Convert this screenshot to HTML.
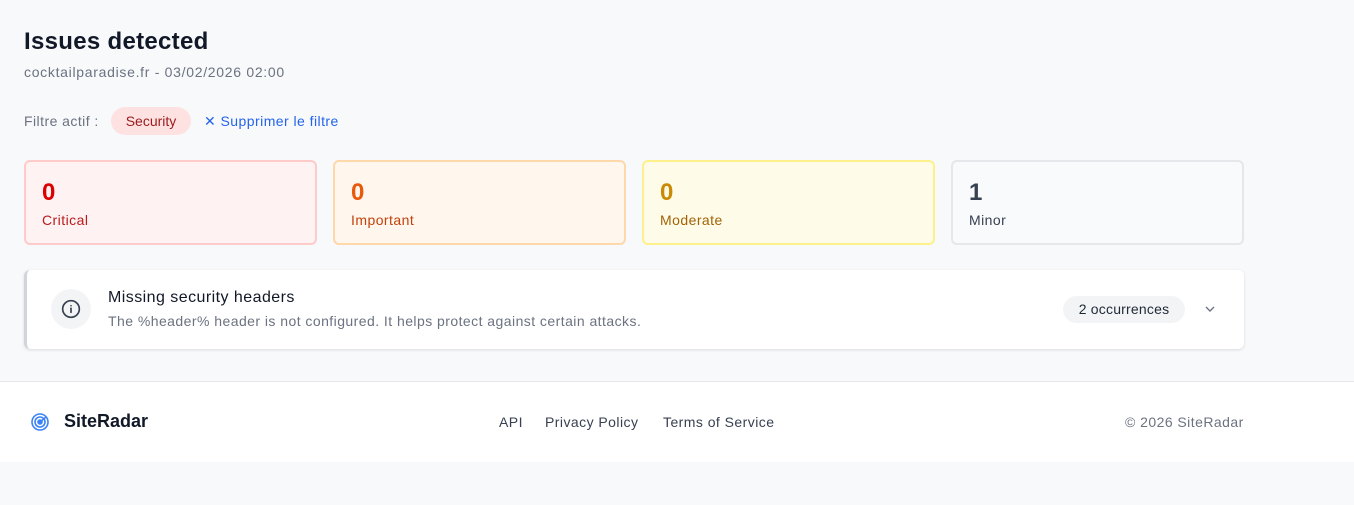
<!DOCTYPE html>
<html><head><meta charset="utf-8"><style>
*{box-sizing:border-box;margin:0;padding:0}
body{width:1354px;height:505px;background:#f8f9fb;font-family:"Liberation Sans",sans-serif;color:#111827;position:relative;overflow:hidden;letter-spacing:0.45px}
.abs{position:absolute}
h1{position:absolute;left:24px;top:28px;font-size:24px;font-weight:bold;color:#111827;letter-spacing:0.3px}
.sub{left:24px;top:64px;font-size:14px;color:#6b7280;letter-spacing:0.7px}
.card{position:absolute;top:160px;width:293px;height:85px;border-radius:6px;border:2px solid}
.card .n{position:absolute;left:16px;top:17px;font-size:24px;font-weight:bold}
.card .l{position:absolute;left:16px;top:50px;font-size:14px}
</style></head><body>
<h1>Issues detected</h1>
<div class="abs sub">cocktailparadise.fr - 03/02/2026 02:00</div>
<div class="abs" style="left:24px;top:113px;font-size:14px;color:#6b7280">Filtre actif :</div>
<div class="abs" style="left:111px;top:107px;width:80px;height:28px;border-radius:14px;background:#fee2e2;color:#991b1b;font-size:14px;text-align:center;line-height:28px;letter-spacing:0">Security</div>
<div class="abs" style="left:204px;top:113px;font-size:14px;color:#2563eb">✕ Supprimer le filtre</div>
<div class="card" style="left:24px;background:#fef2f2;border-color:#fecaca"><div class="n" style="color:#dc0000">0</div><div class="l" style="color:#b91c1c">Critical</div></div>
<div class="card" style="left:333px;background:#fff7ed;border-color:#fed7aa"><div class="n" style="color:#ea580c">0</div><div class="l" style="color:#c2410c">Important</div></div>
<div class="card" style="left:642px;background:#fefce8;border-color:#fef08a"><div class="n" style="color:#ca8a04">0</div><div class="l" style="color:#a16207">Moderate</div></div>
<div class="card" style="left:951px;background:#f9fafb;border-color:#e5e7eb"><div class="n" style="color:#374151">1</div><div class="l" style="color:#374151">Minor</div></div>
<div class="abs" style="left:24px;top:270px;width:1220px;height:79px;background:#fff;border-radius:6px;border-left:3px solid #d1d5db;box-shadow:0 1px 3px rgba(0,0,0,.12)">
<div class="abs" style="left:24px;top:19px;width:40px;height:40px;border-radius:20px;background:#f3f4f6"></div>
<svg class="abs" style="left:34px;top:29px" width="20" height="20" viewBox="0 0 24 24" fill="none" stroke="#374151" stroke-width="2" stroke-linecap="round"><circle cx="12" cy="12" r="10"/><path d="M12 16v-5M12 8h.01"/></svg>
<div class="abs" style="left:81px;top:19px;font-size:16px;color:#111827">Missing security headers</div>
<div class="abs" style="left:81px;top:43px;font-size:14px;color:#6b7280">The %header% header is not configured. It helps protect against certain attacks.</div>
<div class="abs" style="left:1036px;top:26px;width:122px;height:27px;border-radius:14px;background:#f3f4f6;font-size:14px;line-height:27px;text-align:center;color:#1f2937;letter-spacing:0.2px">2 occurrences</div>
<svg class="abs" style="left:1175px;top:31px" width="16" height="16" viewBox="0 0 24 24" fill="none" stroke="#6b7280" stroke-width="2"><path d="M6 9l6 6 6-6"/></svg>
</div>
<div class="abs" style="left:0;top:381px;width:1354px;height:81px;background:#fff;border-top:1px solid #e5e7eb"></div>
<svg class="abs" style="left:30px;top:412px" width="20" height="20" viewBox="0 0 20 20" fill="none" stroke="#3b82f6" stroke-width="1.6"><circle cx="10" cy="10" r="8"/><circle cx="10" cy="10" r="5"/><circle cx="10" cy="10" r="2" fill="#3b82f6"/><path d="M10 10l6-5"/></svg>
<div class="abs" style="left:64px;top:411px;font-size:18px;font-weight:bold;color:#111827;letter-spacing:0">SiteRadar</div>
<div class="abs" style="left:499px;top:414px;font-size:14px;color:#374151">API</div>
<div class="abs" style="left:545px;top:414px;font-size:14px;color:#374151">Privacy Policy</div>
<div class="abs" style="left:663px;top:414px;font-size:14px;color:#374151">Terms of Service</div>
<div class="abs" style="left:1125px;top:414px;font-size:14px;color:#6b7280">© 2026 SiteRadar</div>
</body></html>
